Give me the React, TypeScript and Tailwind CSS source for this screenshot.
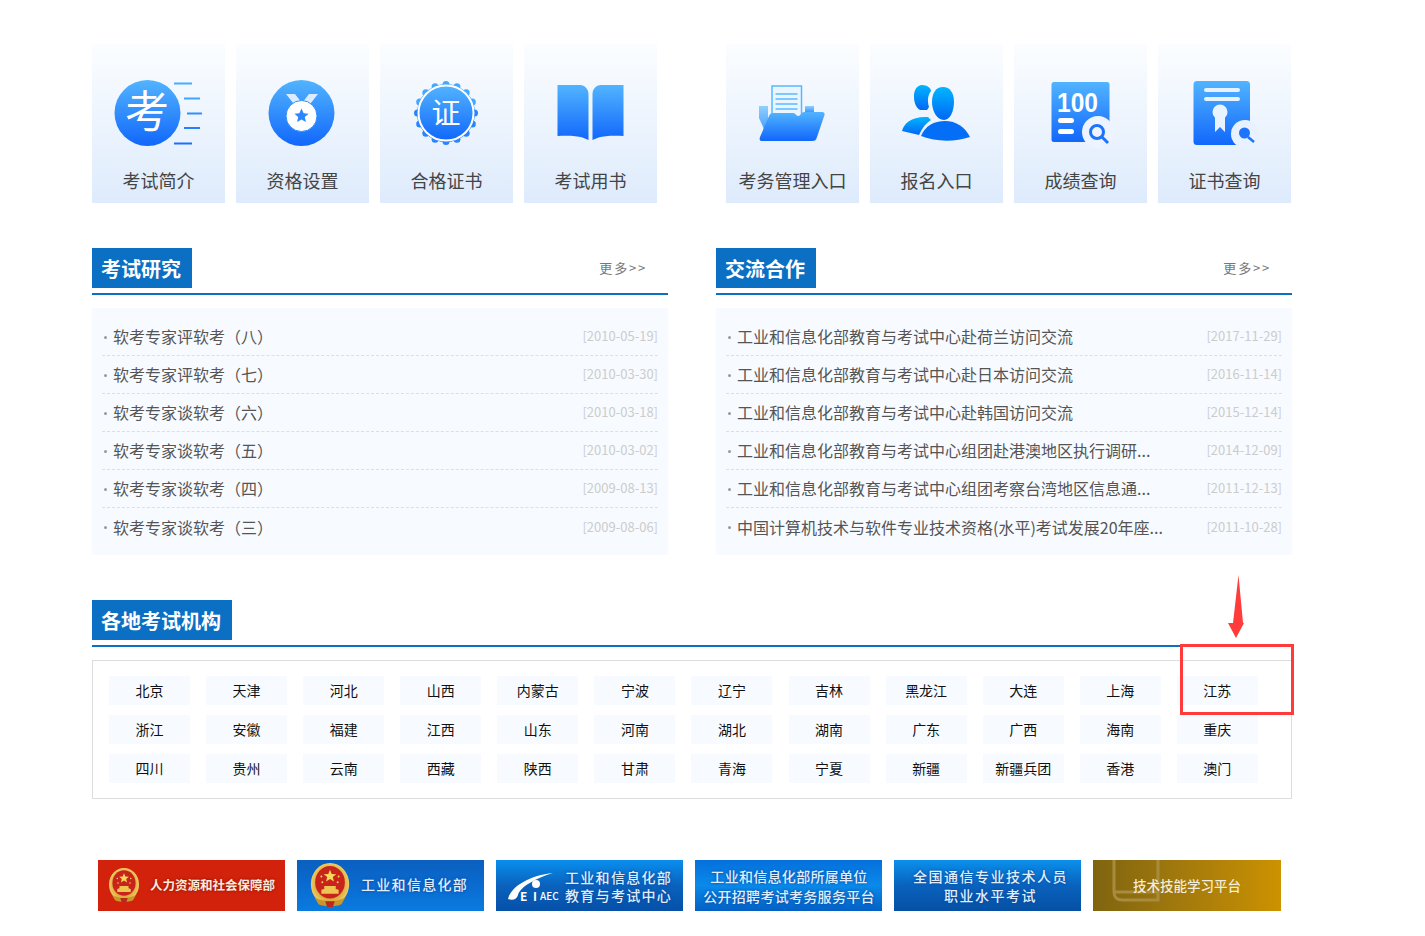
import React from "react";

const researchNews = [
  { title: "软考专家评软考（八）", date: "[2010-05-19]" },
  { title: "软考专家评软考（七）", date: "[2010-03-30]" },
  { title: "软考专家谈软考（六）", date: "[2010-03-18]" },
  { title: "软考专家谈软考（五）", date: "[2010-03-02]" },
  { title: "软考专家谈软考（四）", date: "[2009-08-13]" },
  { title: "软考专家谈软考（三）", date: "[2009-08-06]" },
];

const exchangeNews = [
  { title: "工业和信息化部教育与考试中心赴荷兰访问交流", date: "[2017-11-29]" },
  { title: "工业和信息化部教育与考试中心赴日本访问交流", date: "[2016-11-14]" },
  { title: "工业和信息化部教育与考试中心赴韩国访问交流", date: "[2015-12-14]" },
  { title: "工业和信息化部教育与考试中心组团赴港澳地区执行调研...", date: "[2014-12-09]" },
  { title: "工业和信息化部教育与考试中心组团考察台湾地区信息通...", date: "[2011-12-13]" },
  { title: "中国计算机技术与软件专业技术资格(水平)考试发展20年座...", date: "[2011-10-28]" },
];

const regions = [
  "北京", "天津", "河北", "山西", "内蒙古", "宁波", "辽宁", "吉林", "黑龙江", "大连", "上海", "江苏",
  "浙江", "安徽", "福建", "江西", "山东", "河南", "湖北", "湖南", "广东", "广西", "海南", "重庆",
  "四川", "贵州", "云南", "西藏", "陕西", "甘肃", "青海", "宁夏", "新疆", "新疆兵团", "香港", "澳门",
];

function Grad({ id, from = "#52b4ff", to = "#1167fb" }: { id: string; from?: string; to?: string }) {
  return (
    <defs>
      <linearGradient id={id} x1="0" y1="0" x2="0" y2="1">
        <stop offset="0" stopColor={from} />
        <stop offset="1" stopColor={to} />
      </linearGradient>
    </defs>
  );
}

function IconBox({ children }: { children: React.ReactNode }) {
  return (
    <svg className="-ml-[1px]" width="100" height="80" viewBox="0 0 100 80">
      {children}
    </svg>
  );
}

function IconExam() {
  return (
    <IconBox>
      <Grad id="g1" />
      <rect x="66" y="12.500" width="18" height="2" fill="#45acff" />
      <rect x="76" y="27.500" width="16" height="2" fill="#3fa4ff" />
      <rect x="79" y="42.500" width="15" height="2" fill="#2e8fff" />
      <rect x="76" y="57" width="16" height="2" fill="#2480fd" />
      <rect x="66" y="72.500" width="18" height="2" fill="#1a70fb" />
      <circle cx="39.500" cy="43" r="33" fill="url(#g1)" />
      <text x="39" y="58" textAnchor="middle" fontSize="44" fill="#fff" fontFamily="'Noto Sans CJK SC', sans-serif">
        考
      </text>
    </IconBox>
  );
}

function IconMedal() {
  return (
    <IconBox>
      <Grad id="g2" />
      <circle cx="49.500" cy="43" r="33" fill="url(#g2)" />
      <path d="M34 24h9l7 9 7-9h9l-11 14H45z" fill="#dcecff" />
      <circle cx="49.500" cy="46" r="15.500" fill="#fff" stroke="#2f8cff" strokeWidth="1" />
      <path
        d="M49.500 38.500l2.100 4.700 5 .5-3.800 3.300 1.100 5-4.400-2.600-4.400 2.600 1.100-5-3.800-3.300 5-.5z"
        fill="#2b86fd"
      />
    </IconBox>
  );
}

function IconCertBadge() {
  const bumps = Array.from({ length: 16 }, (_, i) => (i * Math.PI) / 8);
  return (
    <IconBox>
      <Grad id="g3" />
      <circle cx="50" cy="43" r="29" fill="url(#g3)" />
      {bumps.map((a, i) => (
        <circle
          key={i}
          cx={50 + 28.5 * Math.cos(a)}
          cy={43 + 28.5 * Math.sin(a)}
          r="3.500"
          fill={i > 8 ? "#45a8ff" : "#2a84fd"}
        />
      ))}
      <circle cx="50" cy="43" r="27.500" fill="url(#g3)" stroke="#fff" strokeWidth="2" />
      <text x="50" y="54" textAnchor="middle" fontSize="29" fill="#fff" fontFamily="'Noto Sans CJK SC', sans-serif">
        证
      </text>
    </IconBox>
  );
}

function IconBook() {
  return (
    <IconBox>
      <Grad id="g4" />
      <path d="M17.500 15h23c4 0 8 4 8 9v46l-6-2.500c-6-2-17-2-25-1.500z" fill="url(#g4)" />
      <path d="M83.500 15h-23c-4 0-8 4-8 9v46l6-2.500c6-2 17-2 25-1.500z" fill="url(#g4)" />
    </IconBox>
  );
}

function IconFolder() {
  return (
    <IconBox>
      <Grad id="g5" />
      <Grad id="g5b" from="#8fd0ff" to="#2f8dfd" />
      <path d="M17 36h9v32l-9-20z" fill="url(#g5b)" />
      <path d="M63 36h9v7h-9z" fill="url(#g5b)" />
      <rect x="30" y="16" width="29.500" height="32" fill="#eaf6ff" stroke="#58b8ff" strokeWidth="1.500" />
      <path d="M33.500 24h22M33.500 29h22M33.500 34h22M33.500 39h22" stroke="#5cb9ff" strokeWidth="1.500" />
      <path
        d="M27 46c1-2 2-3 4-3h20c3 0 3 3 5 3 3 0 3-4 6-4h18c2 0 3 1 2.500 3L75 67c-1 3-2 4-5 4H21c-3 0-4-1-3-4z"
        fill="url(#g5)"
      />
    </IconBox>
  );
}

function IconPeople() {
  return (
    <IconBox>
      <Grad id="g6" from="#00b6ff" to="#0067f5" />
      <path d="M36 15c5 0 9 3 9 6-3 4-4 9-2 16l-2 3h-7c-5-3-6-9-6-14 0-6 3-11 8-11z" fill="url(#g6)" />
      <path d="M57 17c7 0 11 6 11 15 0 9-4 18-10 18-7 0-12-9-12-18 0-9 4-15 11-15z" fill="url(#g6)" />
      <path d="M16 61c2-8 10-15 26-14l3 3c-5 3-9 8-12 15z" fill="url(#g6)" />
      <path d="M35 66c4-10 13-15 24-15 11 0 20 6 25 16-15 5-34 5-49-1z" fill="#056ef6" />
    </IconBox>
  );
}

function IconScore() {
  return (
    <IconBox>
      <Grad id="g7" />
      <rect x="21.500" y="12" width="58" height="60" rx="2.500" fill="url(#g7)" />
      <text
        x="27"
        y="42"
        fontSize="27"
        fontWeight="700"
        fill="#fff"
        fontFamily="'Liberation Sans', sans-serif"
        textLength="41"
        lengthAdjust="spacingAndGlyphs"
      >
        100
      </text>
      <rect x="28" y="48" width="16" height="5" rx="2.500" fill="#fff" />
      <rect x="28" y="59" width="16" height="5" rx="2.500" fill="#fff" />
      <circle cx="68" cy="62" r="16" fill="#edf4ff" />
      <rect x="70" y="72" width="12" height="4" fill="#eaf2ff" />
      <circle cx="67" cy="62" r="6.500" fill="none" stroke="#1c74fb" strokeWidth="3" />
      <path d="M72 67l6 6" stroke="#1c74fb" strokeWidth="3" />
    </IconBox>
  );
}

function IconCertSearch() {
  return (
    <IconBox>
      <Grad id="g8" />
      <rect x="19.500" y="11" width="56.500" height="64" rx="3.500" fill="url(#g8)" />
      <rect x="30" y="18" width="36" height="4" rx="2" fill="#e6f3ff" />
      <rect x="30" y="27" width="36" height="4" rx="2" fill="#e6f3ff" />
      <circle cx="46" cy="42" r="7.500" fill="#e8f3ff" />
      <path d="M41 47h10v15l-5-5-5 5z" fill="#e8f3ff" />
      <circle cx="71" cy="64" r="14" fill="#e8f1ff" />
      <circle cx="70.500" cy="63" r="5.500" fill="#1c74fb" />
      <path d="M74 67l6 5" stroke="#1c74fb" strokeWidth="2.500" />
    </IconBox>
  );
}

function Tile({ icon, label }: { icon: React.ReactNode; label: string }) {
  return (
    <div className="flex h-[159px] w-[133px] flex-col items-center bg-gradient-to-b from-[#fbfdff] to-[#deebfc] pt-[26px]">
      {icon}
      <div className="mt-[15px] text-[18px] leading-[30px] text-[#444]">{label}</div>
    </div>
  );
}

function SectionHead({ title, more }: { title: string; more?: boolean }) {
  return (
    <div className="flex h-[47px] items-start justify-between border-b-2 border-[#0b6fc2]">
      <div className="flex h-[40px] items-center bg-[#0b70c4] pl-[9px] pr-[11px] pt-[2px] text-[20px] font-bold leading-none text-white">
        {title}
      </div>
      {more && (
        <div className="mr-[21px] mt-[11px] text-[13px] leading-[18px] tracking-[1.800px] text-[#777]">更多&gt;&gt;</div>
      )}
    </div>
  );
}

function NewsPanel({ title, items }: { title: string; items: { title: string; date: string }[] }) {
  return (
    <div className="w-[576px]">
      <SectionHead title={title} more />
      <div className="mt-[13px] h-[247px] bg-[#f7fbff] px-[10px] pb-[9px] pt-[10px]">
        {items.map((item, i) => (
          <div
            key={item.date}
            className={`flex h-[38px] items-center justify-between pb-[1px] ${
              i < items.length - 1 ? "border-b border-dashed border-[#dcdfe3]" : ""
            }`}
          >
            <div className="flex items-center text-[16px] text-[#555]">
              <span className="ml-[2px] mr-[6px] mt-[2px] h-[3px] w-[3px] rounded-full bg-[#999]"></span>
              {item.title}
            </div>
            <div className="text-[13px] text-[#ccc]">{item.date}</div>
          </div>
        ))}
      </div>
    </div>
  );
}

function Emblem({ size, id }: { size: number; id: string }) {
  return (
    <svg width={size} height={size} viewBox="0 0 48 48">
      <defs>
        <radialGradient id={id} cx="0.5" cy="0.5" r="0.5">
          <stop offset="0.7" stopColor="#d9a93a" />
          <stop offset="1" stopColor="#f0cc63" />
        </radialGradient>
      </defs>
      <ellipse cx="24" cy="22" rx="20" ry="22" fill={`url(#${id})`} />
      <ellipse cx="24" cy="20" rx="15.500" ry="17" fill="#c9241c" />
      <path d="M24 7l1.800 4.400 4.700.3-3.600 3 1.200 4.600-4.100-2.500-4.100 2.500 1.200-4.600-3.600-3 4.700-.3z" fill="#f8d85a" />
      <circle cx="15" cy="14" r="1" fill="#f8d85a" />
      <circle cx="33" cy="14" r="1" fill="#f8d85a" />
      <circle cx="16" cy="20" r="1" fill="#f8d85a" />
      <circle cx="32" cy="20" r="1" fill="#f8d85a" />
      <path d="M15 32h18v-4l-3-1v-3H18v3l-3 1z" fill="#eec553" />
      <path d="M8 36c9 5 23 5 32 0l-4 7c-6 3-18 3-24 0z" fill="#c9962b" />
      <path d="M19 40h10l-2 6h-6z" fill="#b92a1e" />
    </svg>
  );
}

function CeiaecLogo() {
  return (
    <div className="relative h-[36px] w-[58px]">
      <svg className="absolute left-0 top-0" width="58" height="36" viewBox="0 0 58 36">
        <path d="M1 31C4 18 24 7 46 5 29 10 13 19 11 27c-1 4-5 6-10 4z" fill="#fff" />
        <circle cx="29" cy="16" r="4" fill="#fff" />
      </svg>
      <span className="absolute left-[13px] top-[20px] text-[12px] font-bold leading-[15px] text-white">E</span>
      <span className="absolute left-[26px] top-[20px] text-[12px] font-bold leading-[15px] text-white">I</span>
      <span className="absolute left-[33px] top-[21px] text-[10px] font-medium leading-[13px] text-white">AEC</span>
    </div>
  );
}

function Banners() {
  const blueText = "font-medium text-[#dfeeff] [text-shadow:0_0_3px_#0a3f94]";
  return (
    <div className="mt-[61px] flex gap-[12px] px-[6px]">
      <div className="flex h-[51px] w-[187px] items-center bg-[#d2220c] pl-[8px]">
        <Emblem size={36} id="em1" />
        <span className="ml-[8px] whitespace-nowrap text-[12.500px] font-bold leading-none text-[#ffe9dc] [text-shadow:0_0_3px_#7a1000]">
          人力资源和社会保障部
        </span>
      </div>
      <div className="flex h-[51px] w-[187px] items-center bg-gradient-to-b from-[#0a60bf] via-[#0a6bd0] to-[#0a7be0] pl-[10px]">
        <Emblem size={46} id="em2" />
        <span className={`mb-[2px] ml-[8px] whitespace-nowrap text-[14px] tracking-[1.300px] ${blueText}`}>工业和信息化部</span>
      </div>
      <div className="flex h-[51px] w-[187px] items-center bg-gradient-to-b from-[#0a8fee] via-[#0a62bd] to-[#0650a8] pl-[11px]">
        <CeiaecLogo />
        <div className={`whitespace-nowrap text-[14px] leading-[18px] tracking-[1.300px] ${blueText}`}>
          <div>工业和信息化部</div>
          <div>教育与考试中心</div>
        </div>
      </div>
      <div
        className={`flex h-[51px] w-[187px] flex-col items-center justify-center bg-gradient-to-b from-[#0670dc] via-[#0a8aea] to-[#0560c4] pl-[1px] text-[14px] leading-[20px] tracking-[0.300px] ${blueText}`}
      >
        <span className="whitespace-nowrap">工业和信息化部所属单位</span>
        <span className="whitespace-nowrap">公开招聘考试考务服务平台</span>
      </div>
      <div
        className={`flex h-[51px] w-[187px] flex-col items-center justify-center bg-gradient-to-b from-[#0a90ec] via-[#0a62bd] to-[#0650a4] pl-[6px] text-[14px] leading-[19px] tracking-[1.500px] ${blueText}`}
      >
        <span className="whitespace-nowrap">全国通信专业技术人员</span>
        <span className="whitespace-nowrap">职业水平考试</span>
      </div>
      <div className="relative flex h-[51px] w-[188px] items-center justify-center overflow-hidden bg-gradient-to-r from-[#7f6410] to-[#cc9200] text-[13.500px] font-medium text-[#f3ecd8]">
        <svg className="absolute left-[19px] top-0" width="50" height="51" viewBox="0 0 50 51">
          <path d="M2 0v32c0 5 3 8 8 8h36V0M2 32h44" fill="none" stroke="#a78c3e" strokeWidth="3" />
        </svg>
        <span className="relative whitespace-nowrap">技术技能学习平台</span>
      </div>
    </div>
  );
}

export default function App() {
  return (
    <div className="relative h-[936px] w-[1425px] overflow-hidden bg-white font-['Noto_Sans_CJK_SC','Microsoft_YaHei',sans-serif]">
      <div className="ml-[92px] w-[1200px] pt-[44px]">
        <div className="flex">
          <div className="flex gap-[11px]">
            <Tile icon={<IconExam />} label="考试简介" />
            <Tile icon={<IconMedal />} label="资格设置" />
            <Tile icon={<IconCertBadge />} label="合格证书" />
            <Tile icon={<IconBook />} label="考试用书" />
          </div>
          <div className="ml-[69px] flex gap-[11px]">
            <Tile icon={<IconFolder />} label="考务管理入口" />
            <Tile icon={<IconPeople />} label="报名入口" />
            <Tile icon={<IconScore />} label="成绩查询" />
            <Tile icon={<IconCertSearch />} label="证书查询" />
          </div>
        </div>

        <div className="mt-[45px] flex justify-between">
          <NewsPanel title="考试研究" items={researchNews} />
          <NewsPanel title="交流合作" items={exchangeNews} />
        </div>

        <div className="mt-[45px]">
          <SectionHead title="各地考试机构" />
          <div className="mt-[13px] grid h-[139px] grid-cols-[repeat(12,81px)] content-start gap-x-[16.090px] gap-y-[10px] border border-[#ddd] pl-[16px] pt-[15px]">
            {regions.map((name) => (
              <div key={name} className="flex h-[29px] items-center justify-center bg-[#f7fbff] text-[14px] text-[#111]">
                {name}
              </div>
            ))}
          </div>
        </div>

        <Banners />
      </div>

      {/* red annotation over the region box */}
      <div className="absolute left-[1180px] top-[644px] h-[71px] w-[114px] border-[3px] border-[#ff3b3b]"></div>
      <svg className="absolute left-[1226px] top-[575px]" width="20" height="65" viewBox="0 0 20 65">
        <path d="M12.500 0L17 48h1l-8 15-8-15h5z" fill="#ff3b3b" />
      </svg>
    </div>
  );
}
